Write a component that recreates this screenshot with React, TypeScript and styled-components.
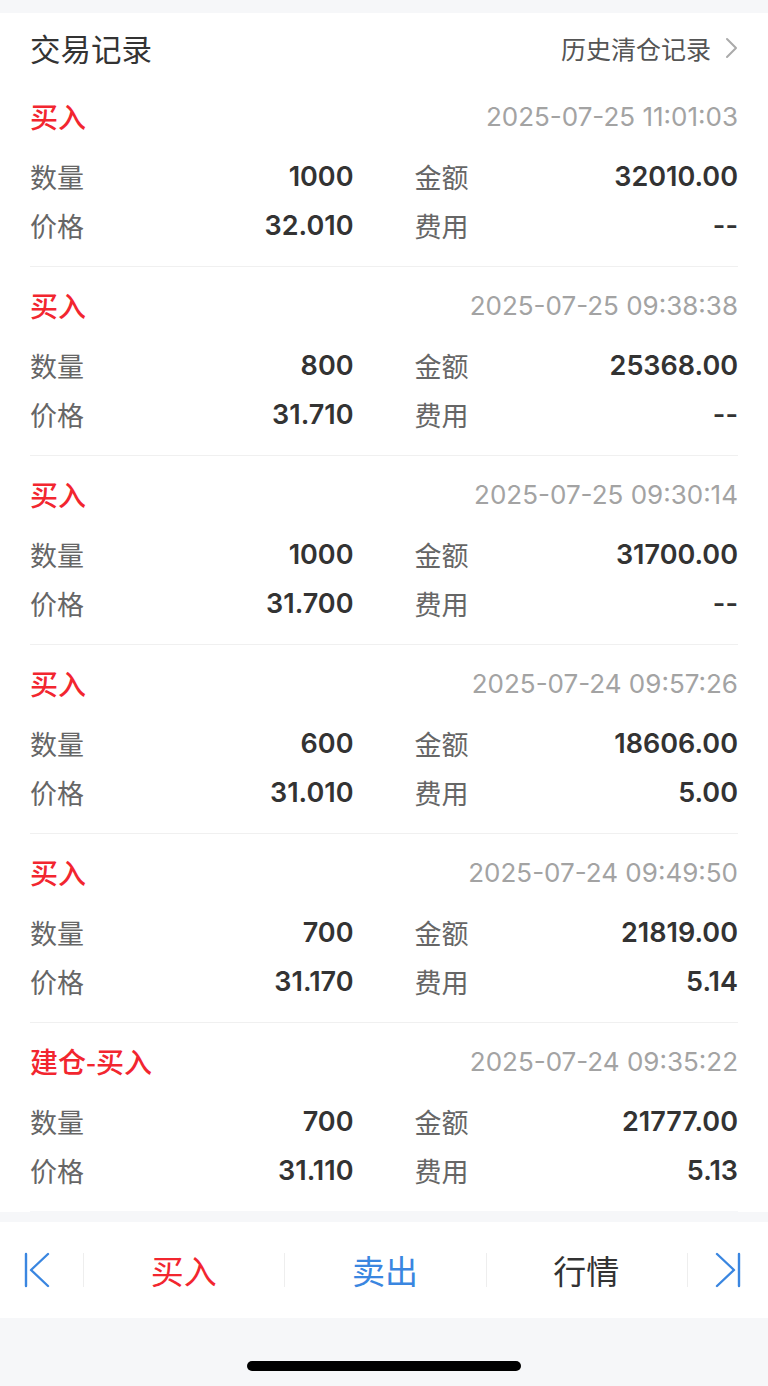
import React from 'react';
import styled, { createGlobalStyle } from 'styled-components';

interface Trade {
  kind: string,
  time: string,
  qty: string,
  amount: string,
  price: string,
  fee: string
}

const trades: Trade[] = [
  { kind: '买入', time: '2025-07-25 11:01:03', qty: '1000', amount: '32010.00', price: '32.010', fee: '--' },
  { kind: '买入', time: '2025-07-25 09:38:38', qty: '800', amount: '25368.00', price: '31.710', fee: '--' },
  { kind: '买入', time: '2025-07-25 09:30:14', qty: '1000', amount: '31700.00', price: '31.700', fee: '--' },
  { kind: '买入', time: '2025-07-24 09:57:26', qty: '600', amount: '18606.00', price: '31.010', fee: '5.00' },
  { kind: '买入', time: '2025-07-24 09:49:50', qty: '700', amount: '21819.00', price: '31.170', fee: '5.14' },
  { kind: '建仓-买入', time: '2025-07-24 09:35:22', qty: '700', amount: '21777.00', price: '31.110', fee: '5.13' },
];

const GlobalStyle = createGlobalStyle`
  body {
    margin: 0;
    background: #f6f7f9;
    font-family: "Inter", "Noto Sans CJK SC", sans-serif;
  }
`

const Page = styled.div`
  width: 768px;
  height: 1386px;
  display: flex;
  flex-direction: column;
  background: #f6f7f9;
  padding-top: 13px;
  box-sizing: border-box;
`
const Card = styled.div`
  background: #fff;
`
const Header = styled.div`
  height: 65px;
  padding: 18px 30px 13px;
  box-sizing: border-box;
  display: flex;
  align-items: center;
  justify-content: space-between;
`
const HeaderTitle = styled.div`
  font-family: "Noto Sans CJK SC", sans-serif;
  font-size: 30.5px;
  color: #333;
  line-height: 34px;
`
const HistoryLink = styled.div`
  display: flex;
  align-items: center;
  gap: 14px;
  font-family: "Noto Sans CJK SC", sans-serif;
  font-size: 25px;
  color: #555;
`
const Record = styled.div<{ $last?: boolean }>`
  margin: 0 30px;
  padding: 20px 0 21px;
  border-bottom: 1px solid ${p => (p.$last ? '#f6f7f9' : '#f0f0f0')};
`
const RecordHead = styled.div`
  display: flex;
  justify-content: space-between;
  align-items: center;
  height: 36px;
`
const Kind = styled.div`
  font-family: "Noto Sans CJK SC", sans-serif;
  font-size: 28px;
  font-weight: 500;
  color: #f2262f;
`
const Time = styled.div`
  font-size: 26px;
  color: #a3a3a3;
`
const Grid = styled.div`
  margin-top: 22px;
  display: grid;
  grid-template-columns: 1fr 1fr;
  column-gap: 61px;
  row-gap: 9px;
`
const Cell = styled.div`
  display: flex;
  justify-content: space-between;
  align-items: center;
  height: 40px;
`
const Label = styled.span`
  font-family: "Noto Sans CJK SC", sans-serif;
  font-size: 27px;
  color: #666;
`
const Value = styled.span`
  font-size: 27px;
  font-weight: 600;
  color: #333;
`
const Gap = styled.div`
  height: 10px;
`
const Toolbar = styled.div`
  height: 96px;
  background: #fff;
  display: grid;
  grid-template-columns: 83px 1fr 1fr 1fr 81px;
  align-items: center;
`
const ToolItem = styled.div<{ $color: string, $divider?: boolean, $align?: string }>`
  position: relative;
  height: 96px;
  display: flex;
  align-items: center;
  justify-content: ${p => p.$align || 'center'};
  font-family: "Noto Sans CJK SC", sans-serif;
  font-size: 33px;
  color: ${p => p.$color};
  &::before {
    content: '';
    display: ${p => (p.$divider ? 'block' : 'none')};
    position: absolute;
    left: 0;
    top: 31px;
    height: 34px;
    width: 1px;
    background: #eeeeee;
  }
`
const Bottom = styled.div`
  flex: 1;
  display: flex;
  justify-content: center;
  padding-top: 43px;
`
const HomeBar = styled.div`
  width: 274px;
  height: 10px;
  border-radius: 5px;
  background: #000;
`

const Chevron = () => (
  <svg width="13" height="22" viewBox="0 0 13 22" fill="none">
    <path d="M2 2l9 9-9 9" stroke="#aaa" strokeWidth="2" strokeLinecap="round" strokeLinejoin="round" />
  </svg>
)

const FirstIcon = () => (
  <svg width="26" height="36" viewBox="0 0 26 36" fill="none">
    <path d="M2 2v32M24 2L7 18l17 16" stroke="#3a86e0" strokeWidth="2.4" strokeLinecap="round" strokeLinejoin="round" />
  </svg>
)

const LastIcon = () => (
  <svg width="26" height="36" viewBox="0 0 26 36" fill="none">
    <path d="M24 2v32M2 2l17 16L2 34" stroke="#3a86e0" strokeWidth="2.4" strokeLinecap="round" strokeLinejoin="round" />
  </svg>
)

const App = () => (
  <Page>
    <GlobalStyle />
    <Card>
      <Header>
        <HeaderTitle>交易记录</HeaderTitle>
        <HistoryLink>历史清仓记录<Chevron /></HistoryLink>
      </Header>
      {trades.map((t, i) => (
        <Record key={i} $last={i === trades.length - 1}>
          <RecordHead>
            <Kind>{t.kind}</Kind>
            <Time>{t.time}</Time>
          </RecordHead>
          <Grid>
            <Cell><Label>数量</Label><Value>{t.qty}</Value></Cell>
            <Cell><Label>金额</Label><Value>{t.amount}</Value></Cell>
            <Cell><Label>价格</Label><Value>{t.price}</Value></Cell>
            <Cell><Label>费用</Label><Value>{t.fee}</Value></Cell>
          </Grid>
        </Record>
      ))}
    </Card>
    <Gap />
    <Toolbar>
      <ToolItem $color="#3a86e0" $align="flex-start" style={{ paddingLeft: 24 }}><FirstIcon /></ToolItem>
      <ToolItem $color="#f2262f" $divider>买入</ToolItem>
      <ToolItem $color="#3a86e0" $divider>卖出</ToolItem>
      <ToolItem $color="#333" $divider>行情</ToolItem>
      <ToolItem $color="#3a86e0" $divider $align="flex-end" style={{ paddingRight: 27 }}><LastIcon /></ToolItem>
    </Toolbar>
    <Bottom>
      <HomeBar />
    </Bottom>
  </Page>
)

export default App;
